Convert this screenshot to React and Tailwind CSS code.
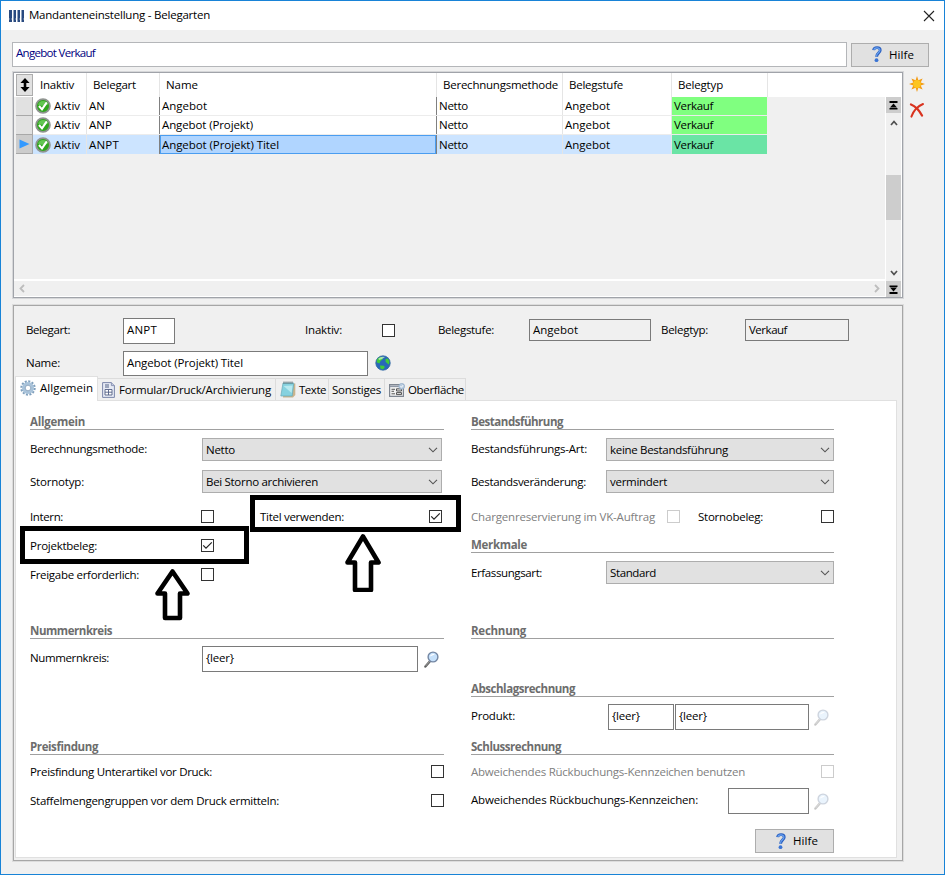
import { useLayoutEffect, useRef, useState } from "react";

// Single line of text whose tracking is adjusted to fill a given width.
function T({ w, children, className = "" }) {
  const ref = useRef(null);
  const [spacing, setSpacing] = useState(0);
  useLayoutEffect(() => {
    const natural = ref.current.getBoundingClientRect().width;
    setSpacing((w - natural) / String(children).length);
  }, [w, children]);
  return (
    <span ref={ref} className={`inline-block shrink-0 whitespace-pre ${className}`} style={{ letterSpacing: `${spacing}px` }}>
      {children}
    </span>
  );
}

function Check({ checked, disabled }) {
  return (
    <span className={`flex h-[13px] w-[13px] shrink-0 items-center justify-center border bg-white ${disabled ? "border-[#cccccc]" : "border-[#333333]"}`}>
      {checked && (
        <svg width="11" height="11" viewBox="0 0 11 11" fill="none" stroke="#222" strokeWidth="1.2">
          <path d="M1.2 5.4 4 8.2 9.8 2.4" />
        </svg>
      )}
    </span>
  );
}

function Combo({ w, children, className }) {
  return (
    <div className={`flex h-[23px] shrink-0 items-center justify-between border border-[#adadad] bg-[#e1e1e1] pl-[3px] pr-[3px] ${className}`}>
      <T w={w}>{children}</T>
      <svg width="10" height="6" viewBox="0 0 10 6" fill="none" stroke="#555" strokeWidth="1.1">
        <path d="M1 .8 5 4.8 9 .8" />
      </svg>
    </div>
  );
}

function Field({ children, className }) {
  return <div className={`flex shrink-0 items-center border border-[#7a7a7a] pl-[3px] ${className}`}>{children}</div>;
}

function Heading({ w, children, className = "" }) {
  return (
    <div className={`flex h-[17px] shrink-0 items-center border-b border-[#a0a0a0] pt-[2px] font-bold text-[#6d6d6d] ${className}`}>
      <T w={w}>{children}</T>
    </div>
  );
}

function Magnifier({ faded }) {
  return (
    <svg className={`shrink-0 ${faded ? "opacity-35" : ""}`} width="15" height="17" viewBox="0 0 15 17">
      <path d="M1.4 15.6 6.2 10" stroke="#5f5f5f" strokeWidth="2.3" strokeLinecap="round" />
      <path d="M1.6 15 6 10" stroke="#b9b9b9" strokeWidth=".7" />
      <circle cx="9" cy="6" r="4.9" fill="#c6e1fb" stroke="#7487a3" strokeWidth="1.4" />
      <path d="M6 5.6C6.4 3.4 8.6 2.5 10.8 3.4 9 4 7.6 4.8 6 5.6Z" fill="#fff" />
    </svg>
  );
}

function HelpButton({ className }) {
  return (
    <div className={`flex h-[24px] shrink-0 items-center border border-[#adadad] bg-[#e1e1e1] pl-[20px] ${className}`}>
      <svg className="mr-[7px] shrink-0" width="10" height="17" viewBox="0 0 10 17" fill="none">
        <path d="M1.6 4.2C2 .8 8.2.8 8.2 4.2 8.2 6.9 4.6 7 4.6 10.8" stroke="#2a5fc0" strokeWidth="2.9" />
        <path d="M1.8 3.9C2.4 1.2 8 1.2 7.9 4.2 7.8 6.7 4.4 7 4.4 10.4" stroke="#6aa2ee" strokeWidth="1.2" />
        <circle cx="4.5" cy="14.2" r="1.9" fill="#3a74d4" />
      </svg>
      <T w={25}>Hilfe</T>
    </div>
  );
}

function OkIcon() {
  return (
    <svg className="shrink-0" width="16" height="16" viewBox="0 0 16 16">
      <circle cx="8" cy="8" r="6.9" fill="#2fa51c" stroke="#8f9490" strokeWidth="1.8" />
      <path d="M3 6.5A5.3 5.3 0 0 1 13 6.5C10 8.3 6 8.3 3 6.5Z" fill="#62c651" />
      <path d="M4 8 7 11.4 11.8 4.4" fill="none" stroke="#fff" strokeWidth="2.1" />
    </svg>
  );
}

const rows = [
  { art: "AN", artW: 16, name: "Angebot", nameW: 45 },
  { art: "ANP", artW: 23, name: "Angebot (Projekt)", nameW: 91 },
  { art: "ANPT", artW: 30, name: "Angebot (Projekt) Titel", nameW: 117, selected: true },
];

function Grid() {
  return (
    <div className="mt-[4px] ml-[11px] flex h-[228px] w-[892px] border border-[#d6d7d9] bg-[#f0f0f0] p-px inset-shadow-[0_0_0_1px_#a0a3a9]">
      <div className="flex min-w-0 grow flex-col">
        <div className="flex h-[24px] shrink-0 bg-white pl-[2px]">
          <div className="mt-px flex h-[22px] w-[17px] items-center justify-center border border-[#adadad] bg-[#e1e1e1]">
            <svg width="10" height="14" viewBox="0 0 10 14">
              <path d="M5 0 9.6 5H6.3V9H9.6L5 14 .4 9H3.7V5H.4Z" fill="#000" />
            </svg>
          </div>
          <div className="flex w-[54px] items-center border-r border-[#e5e5e5] pl-[7px]"><T w={34}>Inaktiv</T></div>
          <div className="flex w-[73px] items-center border-r border-[#e5e5e5] pl-[6px]"><T w={43}>Belegart</T></div>
          <div className="flex w-[277px] items-center border-r border-[#e5e5e5] pl-[6px]"><T w={32}>Name</T></div>
          <div className="flex w-[126px] items-center border-r border-[#e5e5e5] pl-[6px]"><T w={115}>Berechnungsmethode</T></div>
          <div className="flex w-[109px] items-center border-r border-[#e5e5e5] pl-[6px]"><T w={54}>Belegstufe</T></div>
          <div className="flex w-[96px] items-center border-r border-[#e5e5e5] pl-[6px]"><T w={45}>Belegtyp</T></div>
        </div>
        {rows.map((r) => (
          <div key={r.art} className="flex h-[19px] shrink-0 pl-[2px]">
            <div className={`flex w-[17px] items-center justify-center border-r border-b border-[#a8a8a8] ${r.selected ? "bg-[#cccccc]" : "bg-[#e1e1e1]"}`}>
              {r.selected && (
                <svg width="11" height="10" viewBox="0 0 11 10"><path d="M.5.5 10.5 5 .5 9.5Z" fill="#3399ff" /></svg>
              )}
            </div>
            <div className={`flex w-[639px] ${r.selected ? "bg-[#cce4ff]" : "border-b border-[#ececec] bg-white"}`}>
              <div className="flex w-[54px] items-center border-r border-[#e5e5e5] pl-[2px]">
                <OkIcon /><T w={26} className="ml-[3px]">Aktiv</T>
              </div>
              <div className="flex w-[73px] items-center border-r border-[#808080] pl-[2px]"><T w={r.artW}>{r.art}</T></div>
              <div className="flex w-[277px] border-r border-[#808080]">
                <div className={`flex grow items-center ${r.selected ? "border border-[#4a9df0] bg-[#b0d5ff] pl-[1px]" : "pl-[2px]"}`}>
                  <T w={r.nameW}>{r.name}</T>
                </div>
              </div>
              <div className="flex w-[126px] items-center border-r border-[#e5e5e5] pl-[2px]"><T w={29}>Netto</T></div>
              <div className="flex w-[109px] items-center border-r border-[#e5e5e5] pl-[2px]"><T w={45}>Angebot</T></div>
            </div>
            <div className={`flex w-[95px] items-center pl-[2px] ${r.selected ? "bg-[#6ae4a5]" : "border-b border-[#ececec] bg-[#80ff80]"}`}>
              <T w={39}>Verkauf</T>
            </div>
          </div>
        ))}
        <div className="grow" />
        <div className="flex h-[18px] shrink-0 items-center justify-between border-t-2 border-b border-white bg-[#f0f0f0] pl-[5px] pr-[5px]">
          <svg width="6" height="9" viewBox="0 0 6 9" fill="none" stroke="#bdbdbd" strokeWidth="1.8"><path d="M5 1 1.5 4.5 5 8" /></svg>
          <svg width="6" height="9" viewBox="0 0 6 9" fill="none" stroke="#bdbdbd" strokeWidth="1.8"><path d="M1 1 4.5 4.5 1 8" /></svg>
        </div>
      </div>
      <div className="flex w-[17px] shrink-0 flex-col">
        <div className="h-[24px] shrink-0 bg-white" />
        <div className="flex grow flex-col items-stretch border-x border-white">
          <div className="flex h-[16px] items-center justify-center bg-[#cdcdcd]">
            <svg width="9" height="9" viewBox="0 0 9 9"><path d="M.5 0H8.5V2H.5ZM4.5 2.6 8 6.5H1ZM.5 7H8.5V8.6H.5Z" fill="#000" /></svg>
          </div>
          <div className="flex h-[19px] items-center justify-center">
            <svg width="8" height="6" viewBox="0 0 8 6" fill="none" stroke="#505050" strokeWidth="1.7"><path d="M1 5 4 1.5 7 5" /></svg>
          </div>
          <div className="mt-[43px] h-[45px] bg-[#cdcdcd]" />
          <div className="grow" />
          <div className="flex h-[17px] items-center justify-center">
            <svg width="8" height="6" viewBox="0 0 8 6" fill="none" stroke="#505050" strokeWidth="1.7"><path d="M1 1 4 4.5 7 1" /></svg>
          </div>
          <div className="flex h-[16px] items-center justify-center bg-[#cdcdcd]">
            <svg width="9" height="9" viewBox="0 0 9 9"><path d="M.5 .4H8.5V2H.5ZM1 2.5H8L4.5 6.4ZM.5 7H8.5V9H.5Z" fill="#000" /></svg>
          </div>
        </div>
      </div>
    </div>
  );
}

function Tabs() {
  return (
    <div className="mt-px flex h-[24px] shrink-0 items-end">
      <div className="z-10 -mb-px flex h-[25px] w-[83px] items-center border border-b-0 border-[#e0e0e0] bg-white pl-[4px] pb-[2px]">
        <svg className="mr-[4px] shrink-0" width="16" height="16" viewBox="0 0 16 16" fill="none">
          <circle cx="8" cy="8" r="6.6" stroke="#7f9fbc" strokeWidth="2.2" strokeDasharray="2 1.46" />
          <circle cx="8" cy="8" r="4.5" stroke="#a9c3da" strokeWidth="3" />
          <circle cx="8" cy="8" r="2.8" fill="#fff" stroke="#7896b3" strokeWidth=".8" />
        </svg>
        <T w={53}>Allgemein</T>
      </div>
      <div className="flex h-[22px] w-[178px] items-center border-t border-r border-[#dcdcdc] pl-[4px]">
        <svg className="mr-[4px] shrink-0" width="13" height="16" viewBox="0 0 13 16">
          <path d="M.6.6H9.4L12.4 3.6V15.4H.6Z" fill="#e7ebf5" stroke="#7c87aa" />
          <path d="M9.4.6V3.6H12.4" fill="#c2cadf" stroke="#7c87aa" strokeWidth=".8" />
          <path d="M3 3H7M3 5H7" stroke="#536084" />
          <path d="M3 7.5H10V13H3ZM3 10.2H10M6.5 7.5V13" fill="#fff" stroke="#536084" strokeWidth=".9" />
        </svg>
        <T w={152}>Formular/Druck/Archivierung</T>
      </div>
      <div className="flex h-[22px] w-[53px] items-center border-t border-r border-[#dcdcdc] pl-[4px]">
        <svg className="mr-[3px] shrink-0" width="16" height="17" viewBox="0 0 16 17">
          <path d="M4 2.5H15.3V14L13 16.4H3Z" fill="#c9b48d" />
          <path d="M3 2H13.8L12.2 15H.8Z" fill="#86d2df" stroke="#69abb8" strokeWidth=".7" />
          <path d="M3.6 5 12.6 4.5 11.6 12Z" fill="#b8eaf0" />
          <path d="M4 .5V3M6 .5V3M8 .5V3M10 .5V3M12 .5V3" stroke="#596c70" strokeWidth=".9" />
        </svg>
        <T w={27}>Texte</T>
      </div>
      <div className="flex h-[22px] w-[56px] items-center border-t border-r border-[#dcdcdc] pl-[3px]"><T w={49}>Sonstiges</T></div>
      <div className="flex h-[22px] w-[81px] items-center border-t border-r border-[#dcdcdc] pl-[4px]">
        <svg className="mr-[3px] shrink-0" width="16" height="14" viewBox="0 0 16 14">
          <path d="M.6 1.6H14.4V13.4H.6Z" fill="#f2f2f2" stroke="#7e8590" strokeWidth="1.2" />
          <path d="M1 3.3H14" stroke="#8e97a5" strokeWidth="1.6" />
          <path d="M2.5 6.3H6M2.5 8.3H5M2.5 10.8H6" stroke="#555" />
          <path d="M7.5 5.8H12.5V8H7.5ZM7.5 9.6H12.5V11.6H7.5Z" fill="#ddd" stroke="#555" />
          <circle cx="12.7" cy="3.3" r="2.9" fill="#b9cce0" stroke="#8aa5c2" strokeWidth=".7" />
          <path d="M11.5 3.2 12.5 4.3 14 2.2" fill="none" stroke="#fff" strokeWidth=".9" />
        </svg>
        <T w={56}>Oberfläche</T>
      </div>
    </div>
  );
}

function LeftColumn() {
  return (
    <div className="flex w-[414px] flex-col">
      <Heading w={55}>Allgemein</Heading>
      <div className="mt-[8px] flex h-[23px] items-center justify-between pr-[2px]">
        <T w={117} className="pb-px">Berechnungsmethode:</T>
        <Combo w={29} className="w-[240px]">Netto</Combo>
      </div>
      <div className="mt-[9px] flex h-[23px] items-center justify-between pr-[2px]">
        <T w={54}>Stornotyp:</T>
        <Combo w={112} className="w-[240px]">Bei Storno archivieren</Combo>
      </div>
      <div className="mt-[17px] flex h-[13px] items-center">
        <div className="flex w-[171px] items-center"><T w={33}>Intern:</T></div>
        <Check />
        <T w={84} className="ml-[46px]">Titel verwenden:</T>
        <div className="ml-[85px]"><Check checked /></div>
      </div>
      <div className="mt-[16px] flex h-[13px] items-center">
        <div className="flex w-[171px] items-center"><T w={67}>Projektbeleg:</T></div>
        <Check checked />
      </div>
      <div className="mt-[16px] flex h-[13px] items-center">
        <div className="flex w-[171px] items-center"><T w={109}>Freigabe erforderlich:</T></div>
        <Check />
      </div>
      <Heading w={82} className="mt-[41px]">Nummernkreis</Heading>
      <div className="mt-[7px] flex h-[26px] items-center">
        <div className="flex w-[172px] pb-[2px]"><T w={79}>Nummernkreis:</T></div>
        <Field className="mr-[6px] h-[26px] w-[216px] pb-[2px]"><T w={28}>{"{leer}"}</T></Field>
        <Magnifier />
      </div>
      <Heading w={68} className="mt-[66px]">Preisfindung</Heading>
      <div className="mt-[10px] flex h-[13px] items-center justify-between">
        <T w={182}>Preisfindung Unterartikel vor Druck:</T><Check />
      </div>
      <div className="mt-[16px] flex h-[13px] items-center justify-between">
        <T w={249}>Staffelmengengruppen vor dem Druck ermitteln:</T><Check />
      </div>
    </div>
  );
}

function RightColumn() {
  return (
    <div className="ml-[27px] flex w-[363px] flex-col">
      <Heading w={92}>Bestandsführung</Heading>
      <div className="mt-[8px] flex h-[23px] items-center justify-between">
        <T w={116} className="pb-px">Bestandsführungs-Art:</T>
        <Combo w={118} className="w-[228px]">keine Bestandsführung</Combo>
      </div>
      <div className="mt-[9px] flex h-[23px] items-center justify-between">
        <T w={115}>Bestandsveränderung:</T>
        <Combo w={57} className="w-[228px]">vermindert</Combo>
      </div>
      <div className="mt-[17px] flex h-[13px] items-center">
        <T w={184} className="text-[#808080]">Chargenreservierung im VK-Auftrag</T>
        <div className="ml-[12px]"><Check disabled /></div>
        <T w={65} className="ml-[18px]">Stornobeleg:</T>
        <div className="ml-auto"><Check /></div>
      </div>
      <Heading w={56} className="mt-[13px]">Merkmale</Heading>
      <div className="mt-[8px] flex h-[23px] items-center justify-between">
        <T w={71}>Erfassungsart:</T>
        <Combo w={46} className="w-[228px]">Standard</Combo>
      </div>
      <Heading w={55} className="mt-[38px]">Rechnung</Heading>
      <Heading w={104} className="mt-[41px]">Abschlagsrechnung</Heading>
      <div className="mt-[7px] flex h-[26px] items-center">
        <div className="flex w-[137px] pb-[2px]"><T w={44}>Produkt:</T></div>
        <Field className="h-[26px] w-[66px] pb-[2px]"><T w={28}>{"{leer}"}</T></Field>
        <Field className="mr-[5px] ml-px h-[26px] w-[134px] pb-[2px]"><T w={28}>{"{leer}"}</T></Field>
        <Magnifier faded />
      </div>
      <Heading w={90} className="mt-[8px]">Schlussrechnung</Heading>
      <div className="mt-[10px] flex h-[13px] items-center justify-between">
        <T w={274} className="text-[#808080]">Abweichendes Rückbuchungs-Kennzeichen benutzen</T><Check disabled />
      </div>
      <div className="mt-[10px] flex h-[26px] items-center">
        <div className="flex w-[257px] pb-[3px]"><T w={227}>Abweichendes Rückbuchungs-Kennzeichen:</T></div>
        <Field className="mr-[5px] h-[26px] w-[81px]" />
        <Magnifier faded />
      </div>
      <div className="mt-[15px] flex justify-end"><HelpButton className="w-[79px]" /></div>
    </div>
  );
}

function Details() {
  return (
    <div className="mt-[5px] ml-[11px] flex h-[558px] w-[892px] flex-col border border-[#dcdcdc] p-px pl-[2px] inset-shadow-[0_0_0_1px_#a6a6a6]">
      <div className="mt-[12px] flex h-[24px] shrink-0 items-center pl-[11px]">
        <div className="flex w-[97px]"><T w={44}>Belegart:</T></div>
        <Field className="h-[26px] w-[52px] self-start bg-white pb-[2px]"><T w={30}>ANPT</T></Field>
        <T w={37} className="ml-[130px]">Inaktiv:</T>
        <div className="ml-[40px]"><Check /></div>
        <T w={56} className="ml-[43px]">Belegstufe:</T>
        <Field className="ml-[35px] h-[22px] w-[122px]"><T w={45}>Angebot</T></Field>
        <T w={47} className="ml-[10px]">Belegtyp:</T>
        <Field className="ml-[37px] h-[22px] w-[104px]"><T w={38}>Verkauf</T></Field>
      </div>
      <div className="mt-[9px] flex h-[24px] shrink-0 items-center pl-[11px]">
        <div className="flex w-[97px]"><T w={34}>Name:</T></div>
        <Field className="h-[25px] w-[245px] self-start bg-white pb-px"><T w={116}>Angebot (Projekt) Titel</T></Field>
        <svg className="ml-[7px]" width="16" height="16" viewBox="0 0 16 16">
          <circle cx="8" cy="8" r="7.3" fill="#2868b8" />
          <path d="M2 4C4 1.6 6 1.6 7.5 2.4L7.6 4.6 5.6 6 4.4 8.4 1.6 7.2ZM10.5 4 13 3.4 14.6 6.5 14 9.4 12.4 8.4 10.6 6.8ZM5 10.6 9 10.8 9.8 12.3 8 14.4 5.4 13.4Z" fill="#3fcb3a" />
          <path d="M3.4 3.6C5 1.9 8 1.4 10 1.9L7 3.9 4 5Z" fill="#c4f0c0" opacity=".8" />
          <circle cx="8" cy="8" r="7.2" fill="none" stroke="#3a6ea5" strokeWidth=".8" />
        </svg>
      </div>
      <Tabs />
      <div className="flex h-[458px] w-[882px] border border-[#e0e0e0] bg-white pt-[12px] pl-[14px]">
        <LeftColumn />
        <RightColumn />
      </div>
    </div>
  );
}

function Arrow({ d, className }) {
  return (
    <svg className={`absolute ${className}`} width="38" height="60" viewBox="0 0 38 60">
      <path d={d} fill="#fff" stroke="#000" strokeWidth="4.6" strokeLinejoin="round" />
    </svg>
  );
}

export default function App() {
  return (
    <div className="relative h-[875px] w-[945px] overflow-hidden border border-[#1883d7] bg-[#f0f0f0] font-['Open_Sans','Noto_Sans',sans-serif] text-[11.5px] leading-[14px] text-black">
      <div className="flex h-[29px] items-center bg-white pl-[8px] pr-[9px]">
        <svg className="mr-[5px]" width="15" height="12" viewBox="0 0 15 12">
          <path d="M0 0H3V12H0ZM4.5 0H7V12H4.5ZM8.5 0H11V12H8.5ZM12.5 0H15V12H12.5Z" fill="#294a80" />
          <path d="M0 9H15" stroke="#8b9bb5" strokeDasharray="1 1" />
        </svg>
        <T w={181} className="pb-px">Mandanteneinstellung - Belegarten</T>
        <svg className="ml-auto" width="12" height="12" viewBox="0 0 12 12" stroke="#222" strokeWidth="1.1"><path d="M1 1 11 11M11 1 1 11" /></svg>
      </div>
      <div className="mt-[12px] ml-[11px] flex h-[25px] items-center">
        <div className="flex h-[25px] w-[835px] items-center border border-[#b4b6b9] bg-white pl-[3px] pb-[4px] text-[#000080]">
          <T w={79}>Angebot Verkauf</T>
        </div>
        <HelpButton className="ml-[4px] w-[78px]" />
      </div>
      <div className="flex">
        <Grid />
        <div className="mt-[9px] ml-[5px] flex flex-col gap-[10px]">
          <svg width="16" height="16" viewBox="0 0 16 16">
            <path d="M8 0 9.4 4.3 13.6 2.4 11.7 6.6 16 8 11.7 9.4 13.6 13.6 9.4 11.7 8 16 6.6 11.7 2.4 13.6 4.3 9.4 0 8 4.3 6.6 2.4 2.4 6.6 4.3Z" fill="#f39b13" />
            <circle cx="8" cy="8" r="3.9" fill="#fdc51f" />
          </svg>
          <svg width="16" height="16" viewBox="0 0 16 16" fill="none" stroke="#d9331f" strokeLinecap="round">
            <path d="M2 2.5C6 4 10 8 13 13.5" strokeWidth="2.3" />
            <path d="M14 2C9 4 4.5 9 2.4 14.6" strokeWidth="2" />
          </svg>
        </div>
      </div>
      <Details />
      <div className="absolute top-[525px] left-[19px] h-[38px] w-[229px] border-[5px] border-black" />
      <div className="absolute top-[494px] left-[249px] h-[37px] w-[211px] border-[5px] border-black" />
      <Arrow className="top-[565px] left-[153px]" d="M18.5 5.5 33.5 27.5H26V52H11V27.5H3.5Z" />
      <Arrow className="top-[531px] left-[343px]" d="M19 4.5 34.5 30.5H27V58H11V30.5H3.5Z" />
    </div>
  );
}
